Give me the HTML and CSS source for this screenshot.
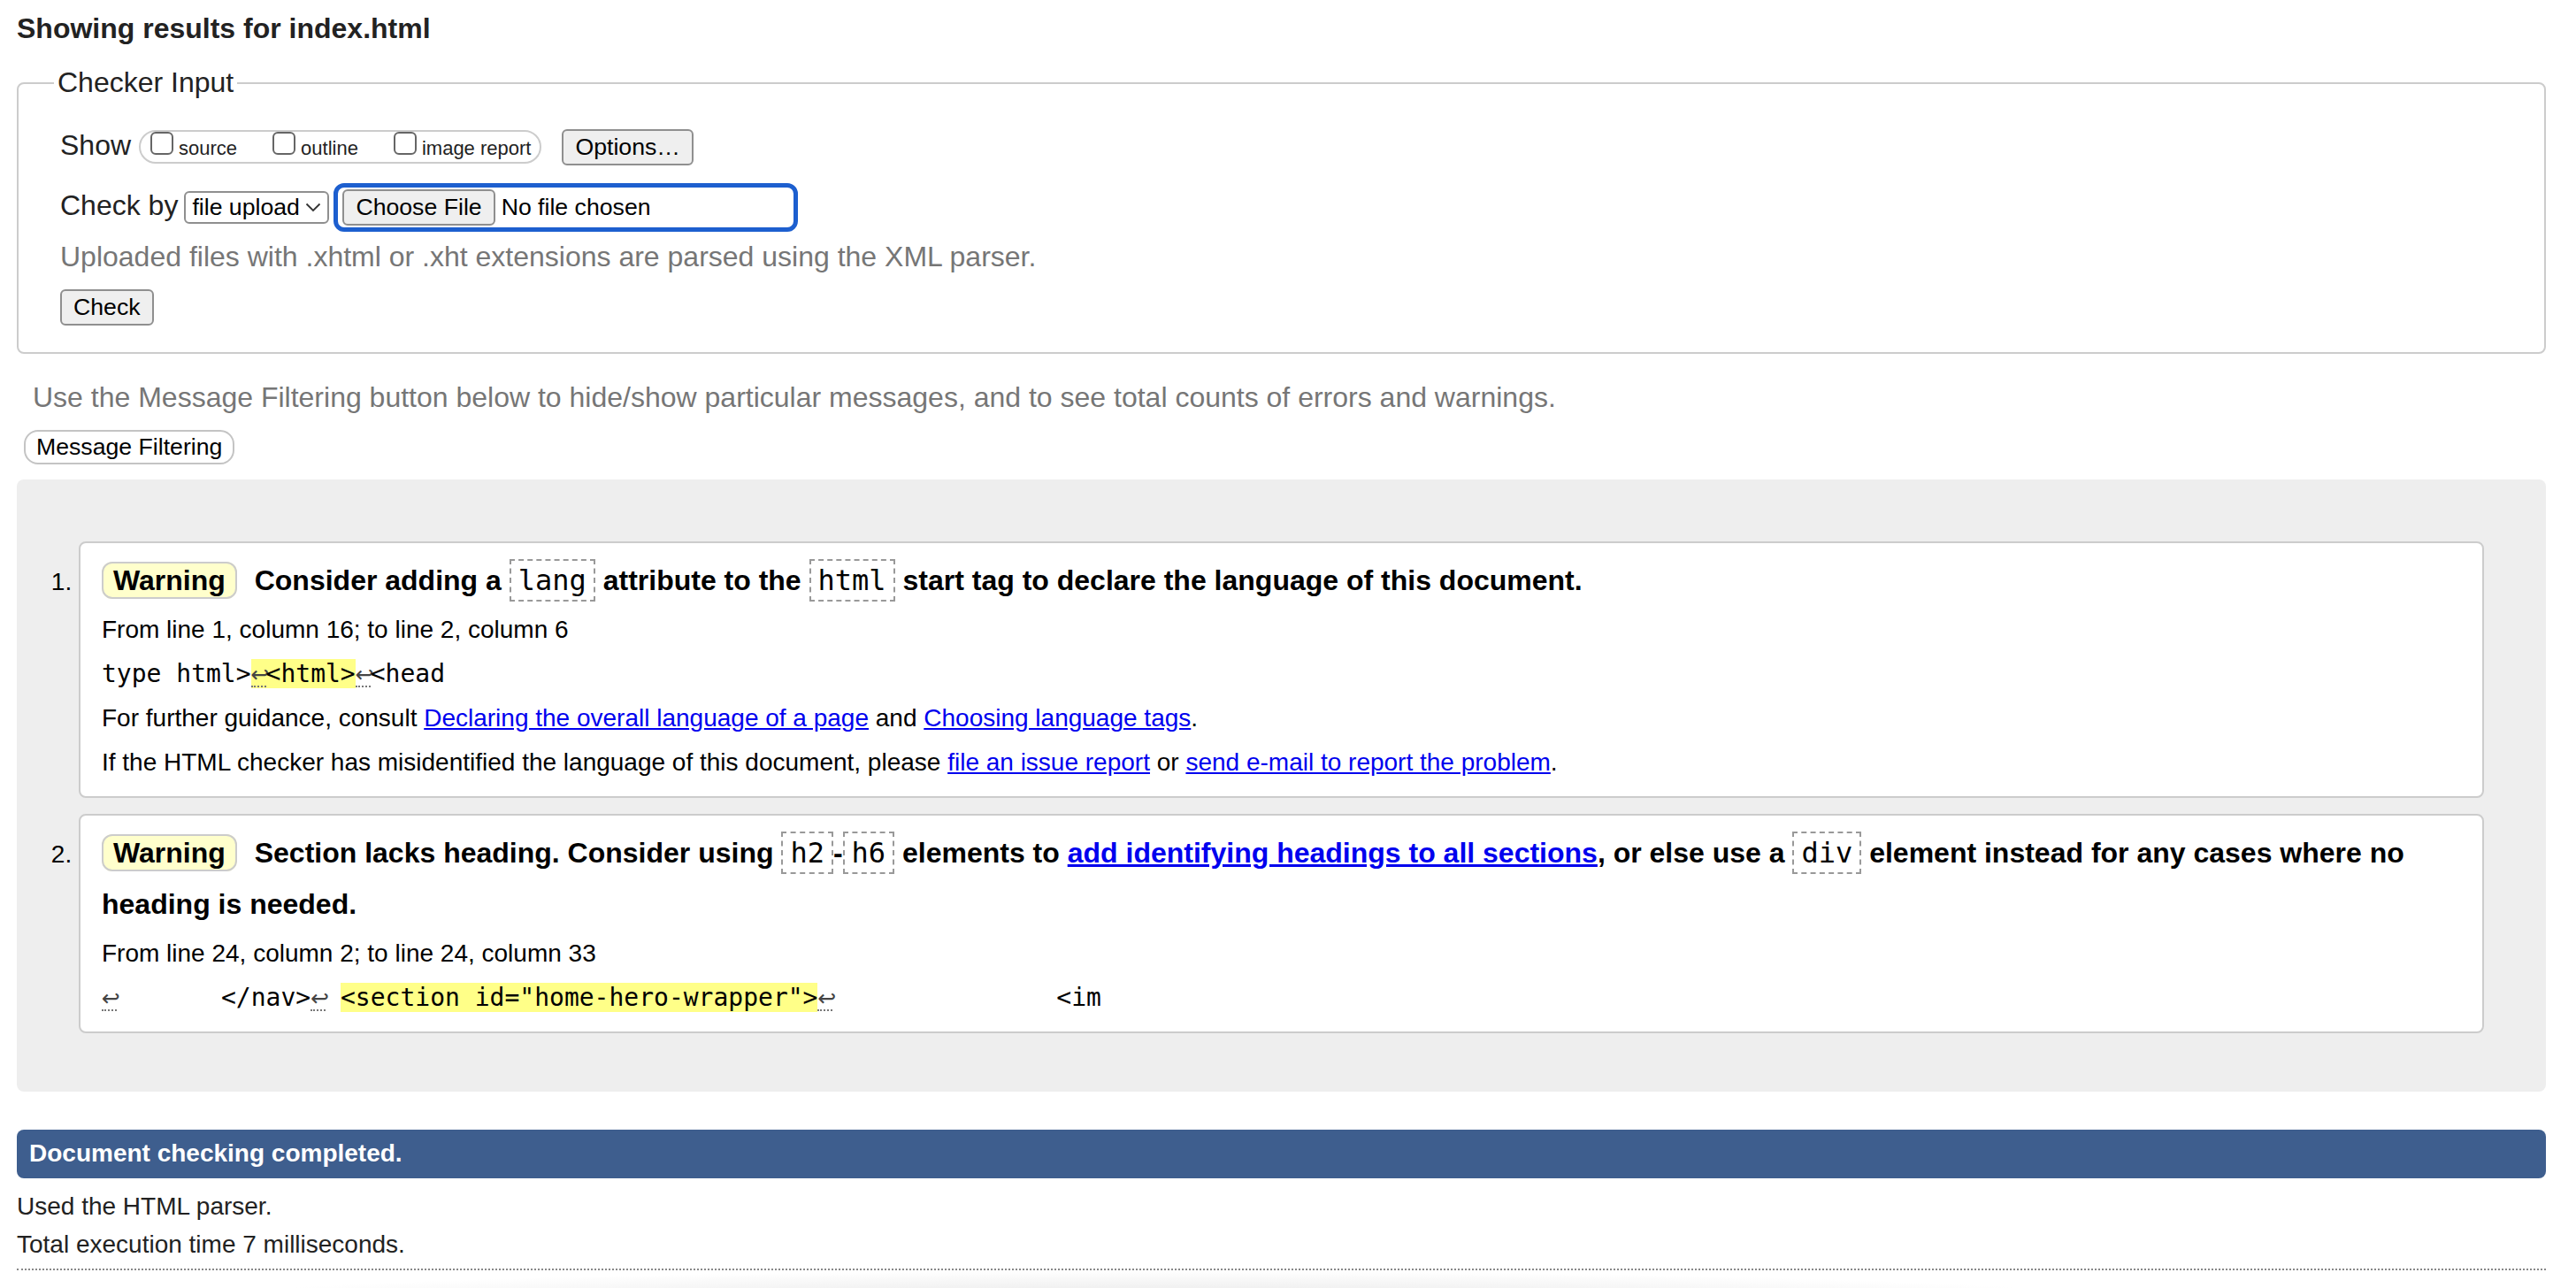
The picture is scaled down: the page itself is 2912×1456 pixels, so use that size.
FILE: index.html
```html
<!DOCTYPE html>
<html lang="en">
<head>
<meta charset="utf-8">
<title>Showing results for index.html - Nu Html Checker</title>
<link rel="stylesheet" href="styles.css">
</head>
<body>
<h2 class="title">Showing results for index.html</h2>
<form class="checker">
  <fieldset class="input">
    <legend>Checker Input</legend>
    <div class="row">
      <span class="label">Show</span>
      <span class="pill">
        <label class="opt"><span class="cb"></span>source</label>
        <label class="opt"><span class="cb"></span>outline</label>
        <label class="opt"><span class="cb"></span>image report</label>
      </span>
      <button type="button" class="btn btn-options">Options…</button>
    </div>
    <div class="row row-by">
      <span class="label">Check by</span>
      <span class="select"><span>file upload</span><svg class="chev" width="18" height="11" viewBox="0 0 18 11"><polyline points="1.5,1.5 9,9 16.5,1.5" fill="none" stroke="#333" stroke-width="1.8"/></svg></span>
      <span class="file"><button type="button" class="btn">Choose File</button><span class="nofile">No file chosen</span></span>
    </div>
    <p class="hint">Uploaded files with .xhtml or .xht extensions are parsed using the XML parser.</p>
    <div class="row row-submit"><button type="button" class="btn">Check</button></div>
  </fieldset>
</form>
<p class="filter-hint">Use the Message Filtering button below to hide/show particular messages, and to see total counts of errors and warnings.</p>
<button type="button" class="btn-filter">Message Filtering</button>
<div class="results">
  <ol class="msgs">
    <li class="msg">
      <p class="msg-head"><strong class="badge">Warning</strong> <span>Consider adding a <code>lang</code> attribute to the <code>html</code> start tag to declare the language of this document.</span></p>
      <p class="loc">From line 1, column 16; to line 2, column 6</p>
      <p class="extract">type html&gt;<mark><span class="lf">↩</span>&lt;html&gt;</mark><span class="lf">↩</span>&lt;head</p>
      <p>For further guidance, consult <a href="#">Declaring the overall language of a page</a> and <a href="#">Choosing language tags</a>.</p>
      <p>If the HTML checker has misidentified the language of this document, please <a href="#">file an issue report</a> or <a href="#">send e-mail to report the problem</a>.</p>
    </li>
    <li class="msg">
      <p class="msg-head"><strong class="badge">Warning</strong> <span>Section lacks heading. Consider using <code>h2</code>-<code>h6</code> elements to <a href="#">add identifying headings to all sections</a>, or else use a <code>div</code> element instead for any cases where no heading is needed.</span></p>
      <p class="loc">From line 24, column 2; to line 24, column 33</p>
      <p class="extract"><span class="lf">↩</span>       &lt;/nav&gt;<span class="lf">↩</span> <mark>&lt;section id="home-hero-wrapper"&gt;</mark><span class="lf">↩</span>               &lt;im</p>
    </li>
  </ol>
</div>
<p class="done">Document checking completed.</p>
<p class="meta">Used the HTML parser.</p>
<p class="meta meta-2">Total execution time 7 milliseconds.</p>
<hr class="dots">
<div class="fade"></div>
</body>
</html>
```

FILE: styles.css
```css
html { background: #fff; }
body {
  margin: 0;
  padding: 14px 34px 0 19px;
  font-family: "Liberation Sans", Arial, Helvetica, sans-serif;
  color: #000;
  background: #fff;
}

.title {
  margin: 0;
  font-size: 32px;
  line-height: 37px;
  font-weight: bold;
  color: #222;
}

.checker { margin: 0; }

.input {
  margin: 24px 0 0;
  border: 2px solid #ccc;
  border-radius: 8px;
  padding: 34px 40px 30px 47px;
  min-width: 0;
}
.input legend {
  font-size: 32px;
  line-height: 37px;
  padding: 0 4px;
  margin-left: -7px;
  color: #222;
}

.row {
  display: flex;
  align-items: baseline;
}
.row-by { margin-top: 20px; }
.row-submit { margin-top: 18px; }

.label {
  font-size: 32px;
  line-height: 37px;
  color: #222;
}

.pill {
  margin-left: 9px;
  display: inline-flex;
  align-items: baseline;
  border: 2px solid #ccc;
  border-radius: 20px;
  padding: 0 10px 3px 11px;
  background: #fff;
}
.opt {
  display: inline-flex;
  align-items: baseline;
  font-size: 22px;
  line-height: 25px;
  color: #222;
}
.opt + .opt { margin-left: 40px; }
.cb {
  display: inline-block;
  width: 22px;
  height: 22px;
  border: 2px solid #666;
  border-radius: 6px;
  background: #fff;
  margin-right: 6px;
}

.btn {
  font-family: "Liberation Sans", Arial, sans-serif;
  font-size: 26.67px;
  line-height: 31px;
  padding: 3px 13px;
  border: 2px solid #8f8f8f;
  border-radius: 6px;
  background: #efefef;
  color: #000;
  margin: 0;
}
.btn-options { margin-left: 23px; }

.select {
  margin-left: 7px;
  display: inline-flex;
  align-items: baseline;
  justify-content: space-between;
  box-sizing: border-box;
  width: 164px;
  border: 2px solid #8f8f8f;
  border-radius: 6px;
  padding: 1px 7px 1px 7px;
  font-size: 26.67px;
  line-height: 31px;
  background: #fff;
}
.chev { align-self: center; }

.file {
  margin-left: 5px;
  display: inline-flex;
  align-items: baseline;
  box-sizing: border-box;
  width: 525px;
  border: 5px solid #1d5fcf;
  border-radius: 12px;
  padding: 2px 5px;
}
.nofile {
  margin-left: 7px;
  font-size: 26.67px;
  line-height: 31px;
}

.hint {
  margin: 10px 0 0;
  font-size: 32px;
  line-height: 37px;
  color: #767676;
}

.filter-hint {
  margin: 31px 0 0 18px;
  font-size: 32px;
  line-height: 37px;
  color: #767676;
}

.btn-filter {
  display: block;
  margin: 18px 0 0 8px;
  font-family: "Liberation Sans", Arial, sans-serif;
  font-size: 26.67px;
  line-height: 31px;
  padding: 2px 12px;
  border: 2px solid #c4c4c4;
  border-radius: 16px;
  background: #fff;
  color: #000;
}

.results {
  margin-top: 17px;
  background: #eee;
  border-radius: 8px;
  padding: 70px 70px 66px;
}
.msgs {
  margin: 0;
  padding: 0;
  list-style: decimal outside;
}
.msg {
  background: #fff;
  border: 2px solid #ccc;
  border-radius: 8px;
  padding: 13px 24px 21px;
  font-size: 28px;
}
.msg + .msg { margin-top: 18px; }
.msg p {
  margin: 16px 0 0;
  line-height: 34px;
}
.msg .msg-head {
  margin: 0;
  font-size: 32px;
  line-height: 58px;
  font-weight: bold;
}
.msg .loc { margin-top: 10px; }

.badge {
  background: #ffc;
  border: 2px solid #ccc;
  border-radius: 12px;
  padding: 1px 11px;
  margin-right: 11px;
}

code {
  font-family: "DejaVu Sans Mono", monospace;
  font-size: 32px;
  font-weight: normal;
  line-height: 1;
  border: 2px dashed #999;
  padding: 3px 8px;
}

a { color: #00e; }

.msg .extract {
  font-family: "DejaVu Sans Mono", monospace;
  font-size: 28px;
  white-space: pre;
}
mark {
  background: #ff8;
  color: inherit;
}
.lf {
  display: inline-block;
  width: 17px;
  text-align: center;
  font-family: "DejaVu Sans", "DejaVu Sans Mono", sans-serif;
  font-size: 25px;
  line-height: 18px;
  color: #444;
  padding-bottom: 3px;
  border-bottom: 2px dotted #777;
  overflow: visible;
}

.done {
  margin: 43px 0 0;
  background: #3e5e8e;
  color: #fff;
  font-weight: bold;
  font-size: 28px;
  line-height: 32px;
  padding: 11px 14px 12px;
  border-radius: 8px;
}
.meta {
  margin: 16px 0 0;
  font-size: 28px;
  line-height: 32px;
  color: #222;
}
.meta-2 { margin-top: 11px; }
.dots {
  border: 0;
  border-top: 2px dotted #888;
  height: 0;
  margin: 11px 0 0;
}
.fade {
  height: 40px;
  background: radial-gradient(ellipse 40% 100% at 45% 100%, #e2e2e2 0%, rgba(255,255,255,0) 100%);
}
```
